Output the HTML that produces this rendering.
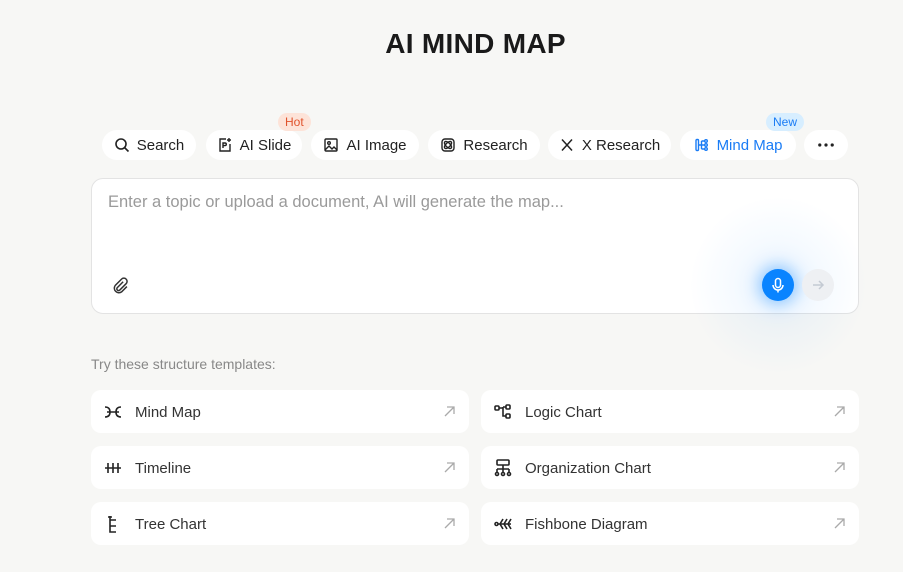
<!DOCTYPE html>
<html><head><style>
*{margin:0;padding:0;box-sizing:border-box}
body{width:903px;height:572px;background:#f7f7f5;font-family:"Liberation Sans",sans-serif;position:relative;overflow:hidden;color:#222}
h1{position:absolute;top:28px;left:24px;width:903px;text-align:center;font-size:28px;font-weight:bold;color:#1a1a1a;letter-spacing:0.3px}
.pill{position:absolute;top:130px;height:30px;border-radius:15px;background:#fff;display:flex;align-items:center;justify-content:center;gap:7px;font-size:15px;color:#222}
.pill svg{width:16px;height:16px}
.badge{position:absolute;height:18px;border-radius:9px;font-size:12px;line-height:18px;padding:0 7px}
.box{position:absolute;left:91px;top:178px;width:768px;height:136px;background:#fff;border:1px solid #e3e3e3;border-radius:12px;overflow:hidden}
.ph{position:absolute;left:16px;top:14px;font-size:16.5px;color:#9a9a9a}
.glow{position:absolute;left:688px;top:195px;width:180px;height:180px;border-radius:50%;background:radial-gradient(circle,rgba(10,132,255,.12) 0%,rgba(10,132,255,.04) 35%,rgba(10,132,255,0) 70%)}
.mic{position:absolute;left:762px;top:269px;width:32px;height:32px;border-radius:50%;background:#0a84ff;box-shadow:0 0 14px 4px rgba(10,132,255,.35);display:flex;align-items:center;justify-content:center}
.send{position:absolute;left:802px;top:269px;width:32px;height:32px;border-radius:50%;background:#eef0f3;display:flex;align-items:center;justify-content:center}
.try{position:absolute;left:91px;top:356px;font-size:14px;color:#888}
.card{position:absolute;width:378px;height:43px;background:#fff;border-radius:10px;font-size:15px;color:#333}
.card .ic{position:absolute;left:13px;top:13px;width:18px;height:18px}
.card span{position:absolute;left:44px;top:14px}
.card .ar{position:absolute;right:14px;top:16px;width:11px;height:11px}
</style></head><body>
<h1>AI MIND MAP</h1>

<div class="pill" style="left:102px;width:94px"><svg viewBox="0 0 16 16" fill="none" stroke="#222" stroke-width="1.6"><circle cx="7" cy="7" r="5"/><path d="M11 11l3.5 3.5"/></svg>Search</div>
<div class="pill" style="left:206px;width:96px"><svg viewBox="0 0 16 16" fill="none" stroke="#222" stroke-width="1.4"><path d="M9 2H3v12h10V7"/><path d="M6 11V6h2a1.3 1.3 0 010 2.6H6"/><path d="M12 1v4M10 3h4"/></svg>AI Slide</div>
<div class="badge" style="left:278px;top:113px;background:#fde3d8;color:#e0532c">Hot</div>
<div class="pill" style="left:311px;width:108px"><svg viewBox="0 0 16 16" fill="none" stroke="#222" stroke-width="1.4"><rect x="2" y="2" width="12" height="12" rx="1"/><circle cx="6" cy="6" r="1.3"/><path d="M2 13l4-4 3 3 2-2 3 3"/></svg>AI Image</div>
<div class="pill" style="left:428px;width:112px"><svg viewBox="0 0 16 16" fill="none" stroke="#222" stroke-width="1.4"><rect x="2" y="2" width="12" height="12" rx="3"/><ellipse cx="8" cy="8" rx="4.5" ry="2.2" transform="rotate(45 8 8)"/><ellipse cx="8" cy="8" rx="4.5" ry="2.2" transform="rotate(-45 8 8)"/></svg>Research</div>
<div class="pill" style="left:548px;width:123px"><svg viewBox="0 0 16 16" fill="none" stroke="#222" stroke-width="1.5"><path d="M3 2.5l10 11M13 2.5l-10 11"/></svg>X Research</div>
<div class="pill" style="left:680px;width:116px;color:#1a7cf5"><svg viewBox="0 0 16 16" fill="none" stroke="#1a7cf5" stroke-width="1.4"><rect x="2" y="2.5" width="2.5" height="11" rx="1"/><path d="M4.5 8h3M7.5 4v8M7.5 4h3M7.5 8h3M7.5 12h3"/><circle cx="12" cy="4" r="1.3"/><circle cx="12" cy="8" r="1.3"/><circle cx="12" cy="12" r="1.3"/></svg>Mind Map</div>
<div class="badge" style="left:766px;top:113px;background:#d7eeff;color:#1a7cf5">New</div>
<div class="pill" style="left:804px;width:44px"><svg width="18" height="4" viewBox="0 0 18 4" fill="#222"><circle cx="2" cy="2" r="1.8"/><circle cx="9" cy="2" r="1.8"/><circle cx="16" cy="2" r="1.8"/></svg></div>

<div class="box"><div class="ph">Enter a topic or upload a document, AI will generate the map...</div>
<svg style="position:absolute;left:20px;top:98px" width="17" height="17" viewBox="0 0 16 16" fill="none" stroke="#333" stroke-width="1.4"><path d="M10.5 4.5L5 10a1.6 1.6 0 002.3 2.3l6-6a3 3 0 00-4.3-4.3L3 8a4.3 4.3 0 006 6l5-5"/></svg>
</div>
<div class="glow"></div>
<div class="mic"><svg width="16" height="16" viewBox="0 0 16 16" fill="none" stroke="#fff" stroke-width="1.5"><rect x="5.5" y="1.5" width="5" height="9" rx="2.5"/><path d="M3 8a5 5 0 0010 0M8 13v2.5"/></svg></div>
<div class="send"><svg width="14" height="14" viewBox="0 0 14 14" fill="none" stroke="#c4cad3" stroke-width="1.5"><path d="M2 7h10M8 3l4 4-4 4"/></svg></div>

<div class="try">Try these structure templates:</div>

<div class="card" style="left:91px;top:390px"><svg class="ic" viewBox="0 0 18 18" fill="none" stroke="#222" stroke-width="1.6"><path d="M1 4q5 0 5 5t-5 5M17 4q-5 0-5 5t5 5M3 9h12"/></svg><span>Mind Map</span><svg class="ar" viewBox="0 0 11 11" fill="none" stroke="#aaa" stroke-width="1.3"><path d="M1 10L10 1M3 1h7v7"/></svg></div>
<div class="card" style="left:91px;top:446px"><svg class="ic" viewBox="0 0 18 18" fill="none" stroke="#222" stroke-width="1.6"><path d="M1 9h16M4 4v10M9 4v10M14 4v10"/></svg><span>Timeline</span><svg class="ar" viewBox="0 0 11 11" fill="none" stroke="#aaa" stroke-width="1.3"><path d="M1 10L10 1M3 1h7v7"/></svg></div>
<div class="card" style="left:91px;top:502px"><svg class="ic" viewBox="0 0 18 18" fill="none" stroke="#222" stroke-width="1.6"><path d="M6 1v16h6M6 5h6M6 11h6M4 2h4"/></svg><span>Tree Chart</span><svg class="ar" viewBox="0 0 11 11" fill="none" stroke="#aaa" stroke-width="1.3"><path d="M1 10L10 1M3 1h7v7"/></svg></div>
<div class="card" style="left:481px;top:390px"><svg class="ic" viewBox="0 0 18 18" fill="none" stroke="#222" stroke-width="1.6"><rect x="1" y="3" width="4" height="4" rx="1"/><rect x="12" y="2" width="4" height="4" rx="1"/><rect x="12" y="11" width="4" height="4" rx="1"/><path d="M5 5h4M9 4v9h3M9 4h3"/></svg><span>Logic Chart</span><svg class="ar" viewBox="0 0 11 11" fill="none" stroke="#aaa" stroke-width="1.3"><path d="M1 10L10 1M3 1h7v7"/></svg></div>
<div class="card" style="left:481px;top:446px"><svg class="ic" viewBox="0 0 18 18" fill="none" stroke="#222" stroke-width="1.6"><rect x="3" y="1" width="12" height="5" rx="1"/><path d="M9 6v4M3 10h12M3 10v3M9 10v3M15 10v3"/><circle cx="3" cy="15" r="1.5"/><circle cx="9" cy="15" r="1.5"/><circle cx="15" cy="15" r="1.5"/></svg><span>Organization Chart</span><svg class="ar" viewBox="0 0 11 11" fill="none" stroke="#aaa" stroke-width="1.3"><path d="M1 10L10 1M3 1h7v7"/></svg></div>
<div class="card" style="left:481px;top:502px"><svg class="ic" viewBox="0 0 18 18" fill="none" stroke="#222" stroke-width="1.6"><circle cx="2.5" cy="9" r="1.5"/><path d="M4 9h13M9 4l-3 5 3 5M13 4l-3 5 3 5M17 4l-3 5 3 5"/></svg><span>Fishbone Diagram</span><svg class="ar" viewBox="0 0 11 11" fill="none" stroke="#aaa" stroke-width="1.3"><path d="M1 10L10 1M3 1h7v7"/></svg></div>
</body></html>
